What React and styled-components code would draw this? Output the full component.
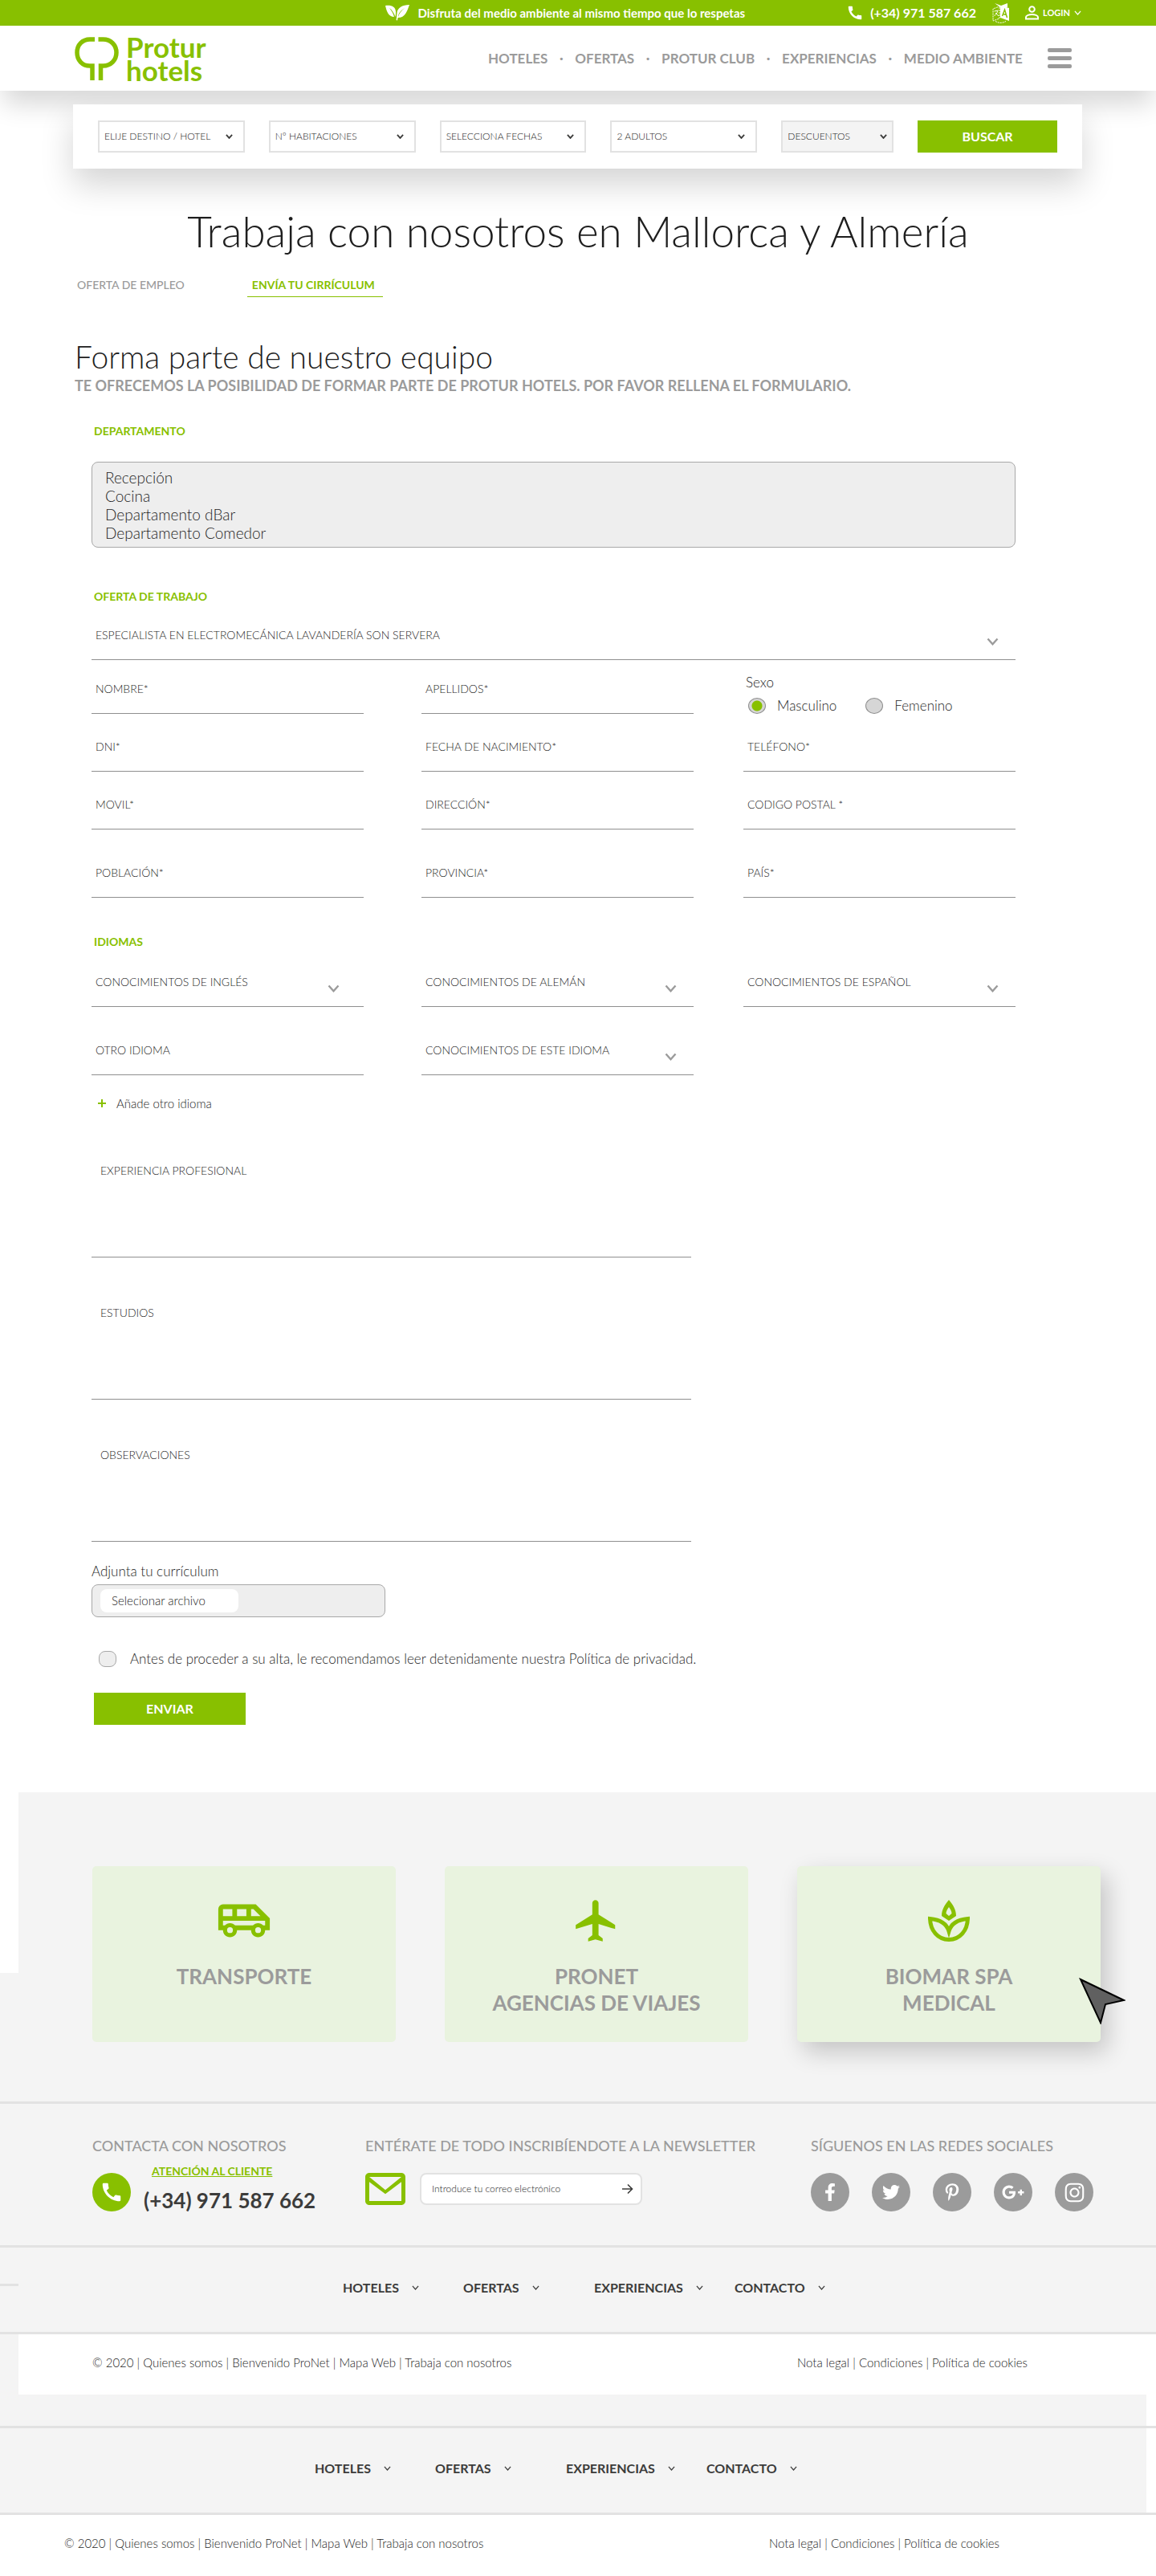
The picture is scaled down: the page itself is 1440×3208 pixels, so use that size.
import React from 'react';
import styled, { createGlobalStyle } from 'styled-components';
import { MdCall, MdFlight, MdOutlineAirportShuttle } from 'react-icons/md';
import { FaFacebookF, FaTwitter, FaPinterestP, FaGooglePlusG, FaInstagram } from 'react-icons/fa';

const green = '#88c000';
const ink = '#1e1e1e';
const dark = '#3c3c3b';
const grey = '#9b9b9b';
const light = '#f4f4f4';
const line = '#e2e2e2';

// CSS
const GlobalStyle = createGlobalStyle`
* { box-sizing: border-box; }
body {
  margin: 0;
  background: #fff;
  color: ${ink};
  font-family: Lato, "Liberation Sans", sans-serif;
  font-size: 14px;
  font-weight: 300;
  line-height: 20px;
}
h1, h2, h3, p, fieldset { margin: 0; padding: 0; border: 0; font-weight: inherit; }
a { color: inherit; text-decoration: none; }
input, select, textarea, button { font: inherit; color: inherit; border-radius: 0; }
svg { display: block; flex: none; }
`

const TopBar = styled.div`
display: flex;
align-items: center;
justify-content: flex-end;
height: 32px;
padding-right: 93px;
background: ${green};
color: #fff;
font-weight: 700;
`

const Slogan = styled.p`
display: flex;
align-items: center;
gap: 10px;
font-size: 15px;
margin-right: 126px;
`

const TopLink = styled.a`
display: flex;
align-items: center;
gap: ${props => props.$small ? '5px' : '8px'};
font-size: ${props => props.$small ? '11px' : '16px'};
margin-left: ${props => props.$small ? '20px' : '0'};
`

const IconButton = styled.button`
display: flex;
padding: 0;
border: 0;
background: none;
cursor: pointer;
margin-left: ${props => props.$space || '0'};
`

const Header = styled.header`
display: flex;
align-items: center;
justify-content: space-between;
height: 81px;
padding: 0 105px 0 93px;
background: #fff;
box-shadow: 0 20px 32px -4px rgba(0, 0, 0, 0.16);
`

const Logo = styled.a`
display: flex;
align-items: center;
gap: 9px;
color: ${green};
font-size: 35px;
font-weight: 700;
line-height: 29px;
`

const HeaderRight = styled.div`
display: flex;
align-items: center;
gap: 31px;
`

const MainNav = styled.nav`
display: flex;
justify-content: space-between;
gap: 10px;
width: 666px;
color: ${grey};
font-size: 17px;
font-weight: 700;
white-space: nowrap;
`

const SearchPanel = styled.form`
display: grid;
grid-template-columns: 183fr 183fr 183fr 183fr 140fr 174fr;
gap: 30px;
align-items: center;
height: 80px;
margin: 17px 92px 0 91px;
padding: 0 31px;
background: #fff;
box-shadow: 0 20px 40px rgba(0, 0, 0, 0.17);
`

const SelectWrap = styled.div`
position: relative;
width: 100%;
max-width: ${props => props.$max || 'none'};
`

const SearchSelect = styled.select`
appearance: none;
display: block;
width: 100%;
height: 40px;
padding: 0 6px;
border: 2px solid ${line};
background: ${props => props.$muted ? light : '#fff'};
font-size: 12px;
`

// the arrow lies over the select
const Arrow = styled.span`
position: absolute;
right: ${props => props.$right};
top: ${props => props.$top};
color: ${props => props.$color || dark};
pointer-events: none;
`

const GreenButton = styled.button`
height: 40px;
width: ${props => props.$width || '100%'};
padding: 0;
border: 0;
background: ${green};
color: #fff;
font-size: 16px;
font-weight: 700;
cursor: pointer;
`

const Title = styled.h1`
margin-top: 48px;
font-size: 53px;
line-height: 60px;
text-align: center;
`

const Tabs = styled.nav`
display: flex;
gap: 78px;
margin: 23px 96px 0;
`

const Tab = styled.a`
line-height: 28px;
color: ${props => props.$active ? green : grey};
font-weight: ${props => props.$active ? 700 : 500};
border-bottom: 1px solid ${props => props.$active ? green : 'transparent'};
padding: ${props => props.$active ? '0 10px 0 6px' : '0'};
`

const Intro = styled.div`
margin: 48px 93px 0;
`

const Subtitle = styled.h2`
font-size: 39px;
line-height: 52px;
`

const Lead = styled.p`
color: ${grey};
font-size: 18px;
font-weight: 700;
`

const Form = styled.form`
display: flex;
flex-direction: column;
align-items: flex-start;
padding: 37px 175px 84px 114px;
`

const SectionLabel = styled.label`
display: block;
padding-left: 3px;
color: ${green};
font-weight: 700;
margin-top: ${props => props.$top || '0'};
`

const ListBox = styled.select`
width: 100%;
height: 107px;
margin: 28px 0 51px;
padding: 7px 14px;
border: 1px solid #a8a8a8;
border-radius: 8px;
background: #eee;
font-size: 19px;
overflow: hidden;
option { padding: 0 2px; height: 23px; line-height: 23px; font-weight: 300; color: ${ink}; }
`

const LineSelect = styled.select`
appearance: none;
display: block;
width: 100%;
height: 41px;
padding: 0 40px 20px 5px;
border: 0;
border-bottom: 1px solid #8f8f8f;
background: none;
line-height: 20px;
`

const Offer = styled.div`
width: 100%;
margin-top: 28px;
`

// three columns, the gutters are not the same width
const Fields = styled.div`
display: grid;
grid-template-columns: 411fr 401fr 339fr;
row-gap: ${props => props.$gap || '31px'};
width: 100%;
margin-top: ${props => props.$top};
`

const Field = styled.div`
max-width: ${props => props.$wide ? '747px' : '339px'};
width: 100%;
border-bottom: 1px solid #8f8f8f;
margin-top: ${props => props.$wide ? '59px' : '0'};
label { display: block; padding-left: ${props => props.$wide ? '11px' : '5px'}; }
input, textarea {
  display: block;
  width: 100%;
  height: ${props => props.$wide ? '97px' : '20px'};
  padding: 0 5px;
  border: 0;
  background: none;
  resize: none;
  outline: none;
}
`

const Gender = styled.fieldset`
margin-top: -8px;
height: 49px;
padding-left: 3px;
font-size: 17px;
legend { padding: 0; line-height: 20px; }
`

const Radios = styled.div`
display: flex;
gap: 36px;
padding: 9px 0 0 3px;
label { display: flex; align-items: center; gap: 14px; }
`

const Radio = styled.input`
appearance: none;
width: 22px;
height: 20px;
margin: 0;
border: 1px solid #8f8f8f;
border-radius: 50%;
background: #d6d6d6;
&:checked { background: radial-gradient(circle, ${green} 6px, #d6d6d6 7px); }
`

const AddButton = styled.button`
display: flex;
align-items: center;
gap: 13px;
margin: 25px 0 5px;
padding: 0 8px;
border: 0;
background: none;
font-size: 15px;
line-height: 20px;
cursor: pointer;
`

const FileLabel = styled.label`
margin-top: 27px;
font-size: 17px;
`

const FileBox = styled.div`
width: 366px;
height: 41px;
margin-top: 6px;
padding: 5px 10px;
border: 1px solid #a8a8a8;
border-radius: 8px;
background: #eee;
input { display: none; }
label {
  display: block;
  width: 172px;
  padding-left: 14px;
  border-radius: 8px;
  background: #fff;
  font-size: 15px;
  line-height: 29px;
}
`

const Privacy = styled.label`
display: flex;
align-items: center;
gap: 17px;
margin: 42px 0 32px;
padding-left: 9px;
font-size: 17px;
`

const Checkbox = styled.input`
appearance: none;
width: 22px;
height: 20px;
margin: 0;
border: 1px solid #a8a8a8;
border-radius: 8px;
background: #eee;
&:checked { background: ${green}; }
`

const Actions = styled.div`
padding-left: 3px;
`

const Cards = styled.section`
display: grid;
grid-template-columns: repeat(3, 1fr);
gap: 61px;
padding: 92px 69px 74px 115px;
background: linear-gradient(#fff, #fff) 0 0 / 23px 225px no-repeat ${light};
`

const Card = styled.a`
position: relative;
display: flex;
flex-direction: column;
align-items: center;
height: 219px;
padding-top: 33px;
border-radius: 5px;
background: #e9f3df;
color: ${grey};
font-size: 26px;
font-weight: 700;
line-height: 33px;
text-align: center;
white-space: pre-line;
box-shadow: ${props => props.$hover ? '8px 12px 30px rgba(0, 0, 0, 0.2)' : 'none'};
`

const CardIcon = styled.span`
display: flex;
align-items: center;
justify-content: center;
height: 70px;
margin-bottom: 18px;
color: ${green};
`

const Pointer = styled.span`
position: absolute;
right: -31px;
top: 139px;
`

const Contact = styled.section`
display: grid;
grid-template-columns: 340fr 555fr 361fr;
padding: 42px 69px 42px 115px;
border-top: 3px solid ${line};
background: ${light};
`

const ContactTitle = styled.h3`
color: ${grey};
font-size: 18px;
font-weight: 500;
`

const PhoneRow = styled.div`
display: flex;
align-items: flex-end;
gap: 16px;
margin-top: 12px;
`

const Round = styled.a`
display: flex;
align-items: center;
justify-content: center;
flex: none;
width: 48px;
height: 48px;
border-radius: 50%;
background: ${props => props.$green ? green : grey};
color: #fff;
`

const PhoneText = styled.div`
a { display: block; margin-left: 10px; color: ${green}; font-weight: 700; text-decoration: underline; }
p { margin-top: 12px; color: ${dark}; font-size: 26px; font-weight: 700; line-height: 28px; white-space: nowrap; }
`

const Newsletter = styled.form`
display: flex;
gap: 18px;
margin-top: 24px;
`

const MailBox = styled.div`
display: flex;
align-items: center;
width: 277px;
height: 40px;
padding: 0 9px 0 13px;
border: 2px solid ${line};
border-radius: 8px;
background: #fff;
font-size: 12px;
input { flex: 1; min-width: 0; padding: 0; border: 0; outline: none; background: none; }
input::placeholder { color: ${ink}; opacity: 1; }
`

const Social = styled.div`
display: flex;
gap: 28px;
margin-top: 24px;
`

const FooterNav = styled.nav`
display: grid;
grid-template-columns: 150px 163px 175px auto;
padding: 40px 0 45px ${props => props.$inset + 312}px;
border: solid ${line};
border-width: 3px 0;
background: ${props => props.$notch
    ? `linear-gradient(${line}, ${line}) 0 45px / 23px 3px no-repeat ${light}`
    : `linear-gradient(#fff, #fff) 100% 0 / 12px 100% no-repeat padding-box, ${light}`};
color: ${dark};
font-size: 16px;
font-weight: 700;
a { display: flex; align-items: center; gap: 16px; }
`

const Spacer = styled.div`
height: 39px;
margin-right: 12px;
background: ${light};
`

const Legal = styled.footer`
display: flex;
justify-content: space-between;
padding: 25px ${props => 275 - props.$inset}px 30px ${props => props.$inset}px;
font-size: 15px;
background: ${props => props.$strip
    ? `linear-gradient(${light}, ${light}) 0 0 / 23px 100% no-repeat #fff`
    : '#fff'};
`

// Drawings
function Chevron({ size = 9, weight = 2 }) {
    return (
        <svg width={size} height={size * 0.7} viewBox="0 0 10 7" fill="none" stroke="currentColor" strokeWidth={weight} aria-hidden="true">
            <path d="M1 1l4 4.5L9 1" />
        </svg>
    )
}

function Leaves() {
    return (
        <svg width="30" height="20" viewBox="0 0 30 20" fill="#fff" aria-hidden="true">
            <path d="M0 1c7-1 13 1 13 8 0 2 0 4-.6 6C11 10 8 6 5 4c3 4 5 7 6 11C4 15 1.500 8 0 1z" />
            <path d="M30 0c-9 0-15 4-15.500 10-.2 2-.4 6-.9 9l1.400.5c.2-1.500.4-2.500.7-3.500C25 16 27 8 30 0zM24 4c-4 3-7 7-8 11 0-4 3-8 8-11z" />
        </svg>
    )
}

function Translate() {
    return (
        <svg width="21" height="25" viewBox="0 0 21 25" fill="none" stroke="#fff" aria-hidden="true">
            <path d="M9 5v14l-8 3V7l8-3" strokeWidth="1" strokeDasharray="2 1" />
            <path d="M3 0l8 3 8-3v5H10z" fill="#fff" stroke="none" />
            <path d="M10 3l11 3v16l-11-4z" fill="#fff" stroke="none" />
            <path d="M12.500 16l3-8 3 10M13.500 13.500l4 1" stroke={green} strokeWidth="1.500" />
            <path d="M2.500 10l5-1M6.500 9.500c0 3-2 5-4 6M4 12l4 4" strokeWidth="1" />
            <path d="M4 22.500c4 2.500 9 2.500 13 0" strokeWidth="1" strokeDasharray="2 1" />
        </svg>
    )
}

function Person() {
    return (
        <svg width="17" height="18" viewBox="0 0 17 18" fill="none" stroke="#fff" strokeWidth="2" aria-hidden="true">
            <circle cx="8.500" cy="4.500" r="3.300" />
            <path d="M1 16.500v-2.200c0-2 4-3.300 7.500-3.300s7.500 1.300 7.500 3.300v2.200z" />
        </svg>
    )
}

function Tree() {
    return (
        <svg width="55" height="54" viewBox="0 0 55 54" fill="none" stroke={green} strokeWidth="5.500" aria-hidden="true">
            <path d="M25 3h-6C9.500 3 3 10 3 19.500S9.500 36 19 36h3v18" />
            <path d="M29.500 3h6C45 3 52 10 52 19.500S45 36 35.500 36h-3v18" />
        </svg>
    )
}

function Spa() {
    return (
        <svg width="52" height="52" viewBox="0 0 52 52" aria-hidden="true">
            <path fill={green} fillRule="evenodd" d="M26 0c5 6 9 12 9 20l-9 6-9-6c0-8 4-14 9-20zm0 9c-2 3-3.500 5-3.500 8l3.500 3 3.500-3c0-3-1.500-5-3.500-8z" />
            <path fill="none" stroke={green} strokeWidth="5" d="M2.500 23.500C15 24.500 23 29 26 39c3-10 11-14.500 23.500-15.500C49 38 40 49.500 26 49.500S3 38 2.500 23.500z" />
        </svg>
    )
}

function Envelope() {
    return (
        <svg width="50" height="40" viewBox="2 4 20 16" fill={green} aria-hidden="true">
            <path d="M22 6c0-1.100-.9-2-2-2H4c-1.100 0-2 .9-2 2v12c0 1.100.9 2 2 2h16c1.100 0 2-.9 2-2V6zm-2 0l-8 6.500L4 6h16zm0 12H4V8.500l8 6 8-6V18z" />
        </svg>
    )
}

// Code for Components starts here
function SearchField({ text, muted }) {
    return (
        <SelectWrap>
            <SearchSelect $muted={muted} aria-label={text}>
                <option>{text}</option>
            </SearchSelect>
            <Arrow $right={muted ? '8px' : '15px'} $top="17px"><Chevron /></Arrow>
        </SelectWrap>
    )
}

function LineSelectField({ id, text, max = '339px', right = '21px' }) {
    return (
        <SelectWrap $max={max}>
            <LineSelect id={id} aria-label={text}>
                <option>{text}</option>
            </LineSelect>
            <Arrow $right={right} $top="13px" $color={grey}><Chevron size={15} weight={1.600} /></Arrow>
        </SelectWrap>
    )
}

function TextField({ id, text }) {
    return (
        <Field>
            <label htmlFor={id}>{text}</label>
            <input id={id} type="text" />
        </Field>
    )
}

function AreaField({ id, text }) {
    return (
        <Field $wide>
            <label htmlFor={id}>{text}</label>
            <textarea id={id} />
        </Field>
    )
}

function FooterMenu({ inset, notch }) {
    const items = ['HOTELES', 'OFERTAS', 'EXPERIENCIAS', 'CONTACTO'];
    return (
        <FooterNav $inset={inset} $notch={notch}>
            {items.map(item => (
                <a href="#" key={item}>{item} <Chevron weight={1.400} /></a>
            ))}
        </FooterNav>
    )
}

function LegalBar({ inset, strip }) {
    return (
        <Legal $inset={inset} $strip={strip}>
            <p>© 2020 | <a href="#">Quienes somos</a> | <a href="#">Bienvenido ProNet</a> | <a href="#">Mapa Web</a> | <a href="#">Trabaja con nosotros</a></p>
            <p><a href="#">Nota legal</a> | <a href="#">Condiciones</a> | <a href="#">Política de cookies</a></p>
        </Legal>
    )
}

function App() {
    return (
        <div>
            <GlobalStyle />
            <TopBar>
                <Slogan><Leaves /> Disfruta del medio ambiente al mismo tiempo que lo respetas</Slogan>
                <TopLink href="#"><MdCall size={22} /> (+34) 971 587 662</TopLink>
                <IconButton $space="20px" aria-label="Idioma"><Translate /></IconButton>
                <TopLink href="#" $small><Person /> LOGIN <Chevron weight={1.400} /></TopLink>
            </TopBar>
            <Header>
                <Logo href="#"><Tree /><span>Protur<br />hotels</span></Logo>
                <HeaderRight>
                    <MainNav>
                        <a href="#">HOTELES</a><span>·</span>
                        <a href="#">OFERTAS</a><span>·</span>
                        <a href="#">PROTUR CLUB</a><span>·</span>
                        <a href="#">EXPERIENCIAS</a><span>·</span>
                        <a href="#">MEDIO AMBIENTE</a>
                    </MainNav>
                    <IconButton aria-label="Menú">
                        <svg width="30" height="25" viewBox="0 0 30 25" fill={grey}>
                            <rect width="30" height="5" rx="2" />
                            <rect y="10" width="30" height="5" rx="2" />
                            <rect y="20" width="30" height="5" rx="2" />
                        </svg>
                    </IconButton>
                </HeaderRight>
            </Header>

            <SearchPanel>
                <SearchField text="ELIJE DESTINO / HOTEL" />
                <SearchField text="Nº HABITACIONES" />
                <SearchField text="SELECCIONA FECHAS" />
                <SearchField text="2 ADULTOS" />
                <SearchField text="DESCUENTOS" muted />
                <GreenButton type="button">BUSCAR</GreenButton>
            </SearchPanel>

            <Title>Trabaja con nosotros en Mallorca y Almería</Title>
            <Tabs>
                <Tab href="#">OFERTA DE EMPLEO</Tab>
                <Tab href="#" $active>ENVÍA TU CIRRÍCULUM</Tab>
            </Tabs>
            <Intro>
                <Subtitle>Forma parte de nuestro equipo</Subtitle>
                <Lead>TE OFRECEMOS LA POSIBILIDAD DE FORMAR PARTE DE PROTUR HOTELS. POR FAVOR RELLENA EL FORMULARIO.</Lead>
            </Intro>

            <Form>
                <SectionLabel htmlFor="departamento">DEPARTAMENTO</SectionLabel>
                <ListBox id="departamento" multiple size="4">
                    <option>Recepción</option>
                    <option>Cocina</option>
                    <option>Departamento dBar</option>
                    <option>Departamento Comedor</option>
                </ListBox>
                <SectionLabel htmlFor="oferta">OFERTA DE TRABAJO</SectionLabel>
                <Offer>
                    <LineSelectField id="oferta" text="ESPECIALISTA EN ELECTROMECÁNICA LAVANDERÍA SON SERVERA" max="none" />
                </Offer>
                <Fields $top="26px">
                    <TextField id="nombre" text="NOMBRE*" />
                    <TextField id="apellidos" text="APELLIDOS*" />
                    <Gender>
                        <legend>Sexo</legend>
                        <Radios>
                            <label><Radio type="radio" name="sexo" defaultChecked /> Masculino</label>
                            <label><Radio type="radio" name="sexo" /> Femenino</label>
                        </Radios>
                    </Gender>
                    <TextField id="dni" text="DNI*" />
                    <TextField id="nacimiento" text="FECHA DE NACIMIENTO*" />
                    <TextField id="telefono" text="TELÉFONO*" />
                    <TextField id="movil" text="MOVIL*" />
                    <TextField id="direccion" text="DIRECCIÓN*" />
                    <TextField id="postal" text="CODIGO POSTAL *" />
                </Fields>
                <Fields $top="44px">
                    <TextField id="poblacion" text="POBLACIÓN*" />
                    <TextField id="provincia" text="PROVINCIA*" />
                    <TextField id="pais" text="PAÍS*" />
                </Fields>

                <SectionLabel htmlFor="ingles" $top="45px">IDIOMAS</SectionLabel>
                <Fields $top="30px" $gap="44px">
                    <LineSelectField id="ingles" text="CONOCIMIENTOS DE INGLÉS" right="30px" />
                    <LineSelectField id="aleman" text="CONOCIMIENTOS DE ALEMÁN" />
                    <LineSelectField id="espanol" text="CONOCIMIENTOS DE ESPAÑOL" />
                    <TextField id="otro" text="OTRO IDIOMA" />
                    <LineSelectField id="nivel" text="CONOCIMIENTOS DE ESTE IDIOMA" />
                </Fields>
                <AddButton type="button">
                    <svg width="10" height="10" viewBox="0 0 10 10" fill={green}><path d="M4 0h2v4h4v2H6v4H4V6H0V4h4z" /></svg>
                    Añade otro idioma
                </AddButton>

                <AreaField id="experiencia" text="EXPERIENCIA PROFESIONAL" />
                <AreaField id="estudios" text="ESTUDIOS" />
                <AreaField id="observaciones" text="OBSERVACIONES" />

                <FileLabel htmlFor="archivo">Adjunta tu currículum</FileLabel>
                <FileBox>
                    <label htmlFor="archivo">Selecionar archivo</label>
                    <input id="archivo" type="file" />
                </FileBox>
                <Privacy>
                    <Checkbox type="checkbox" />
                    Antes de proceder a su alta, le recomendamos leer detenidamente nuestra Política de privacidad.
                </Privacy>
                <Actions>
                    <GreenButton type="button" $width="189px">ENVIAR</GreenButton>
                </Actions>
            </Form>

            <Cards>
                <Card href="#">
                    <CardIcon><MdOutlineAirportShuttle size={70} /></CardIcon>
                    TRANSPORTE
                </Card>
                <Card href="#">
                    <CardIcon><MdFlight size={62} /></CardIcon>
                    {'PRONET\nAGENCIAS DE VIAJES'}
                </Card>
                <Card href="#" $hover>
                    <CardIcon><Spa /></CardIcon>
                    {'BIOMAR SPA\nMEDICAL'}
                    <Pointer>
                        <svg width="58" height="58" viewBox="0 0 58 58" fill="#606060" stroke="#000" strokeWidth="2">
                            <path d="M2 2l54 26-23 5-6 23z" />
                        </svg>
                    </Pointer>
                </Card>
            </Cards>

            <Contact>
                <div>
                    <ContactTitle>CONTACTA CON NOSOTROS</ContactTitle>
                    <PhoneRow>
                        <Round href="#" $green aria-label="Llamar"><MdCall size={30} /></Round>
                        <PhoneText>
                            <a href="#">ATENCIÓN AL CLIENTE</a>
                            <p>(+34) 971 587 662</p>
                        </PhoneText>
                    </PhoneRow>
                </div>
                <div>
                    <ContactTitle>ENTÉRATE DE TODO INSCRIBÍENDOTE A LA NEWSLETTER</ContactTitle>
                    <Newsletter>
                        <Envelope />
                        <MailBox>
                            <input type="email" aria-label="Correo electrónico" placeholder="Introduce tu correo electrónico" />
                            <IconButton type="button" aria-label="Enviar">
                                <svg width="14" height="14" viewBox="0 0 14 14" fill="none" stroke={dark} strokeWidth="1.600"><path d="M0 7h12.500M7 1.500L12.500 7 7 12.500" /></svg>
                            </IconButton>
                        </MailBox>
                    </Newsletter>
                </div>
                <div>
                    <ContactTitle>SÍGUENOS EN LAS REDES SOCIALES</ContactTitle>
                    <Social>
                        <Round href="#" aria-label="Facebook"><FaFacebookF size={22} /></Round>
                        <Round href="#" aria-label="Twitter"><FaTwitter size={22} /></Round>
                        <Round href="#" aria-label="Pinterest"><FaPinterestP size={22} /></Round>
                        <Round href="#" aria-label="Google Plus"><FaGooglePlusG size={28} /></Round>
                        <Round href="#" aria-label="Instagram"><FaInstagram size={27} /></Round>
                    </Social>
                </div>
            </Contact>

            <FooterMenu inset={115} notch />
            <LegalBar inset={115} strip />
            <Spacer />
            <FooterMenu inset={80} />
            <LegalBar inset={80} />
        </div>
    )
}

export default App;
